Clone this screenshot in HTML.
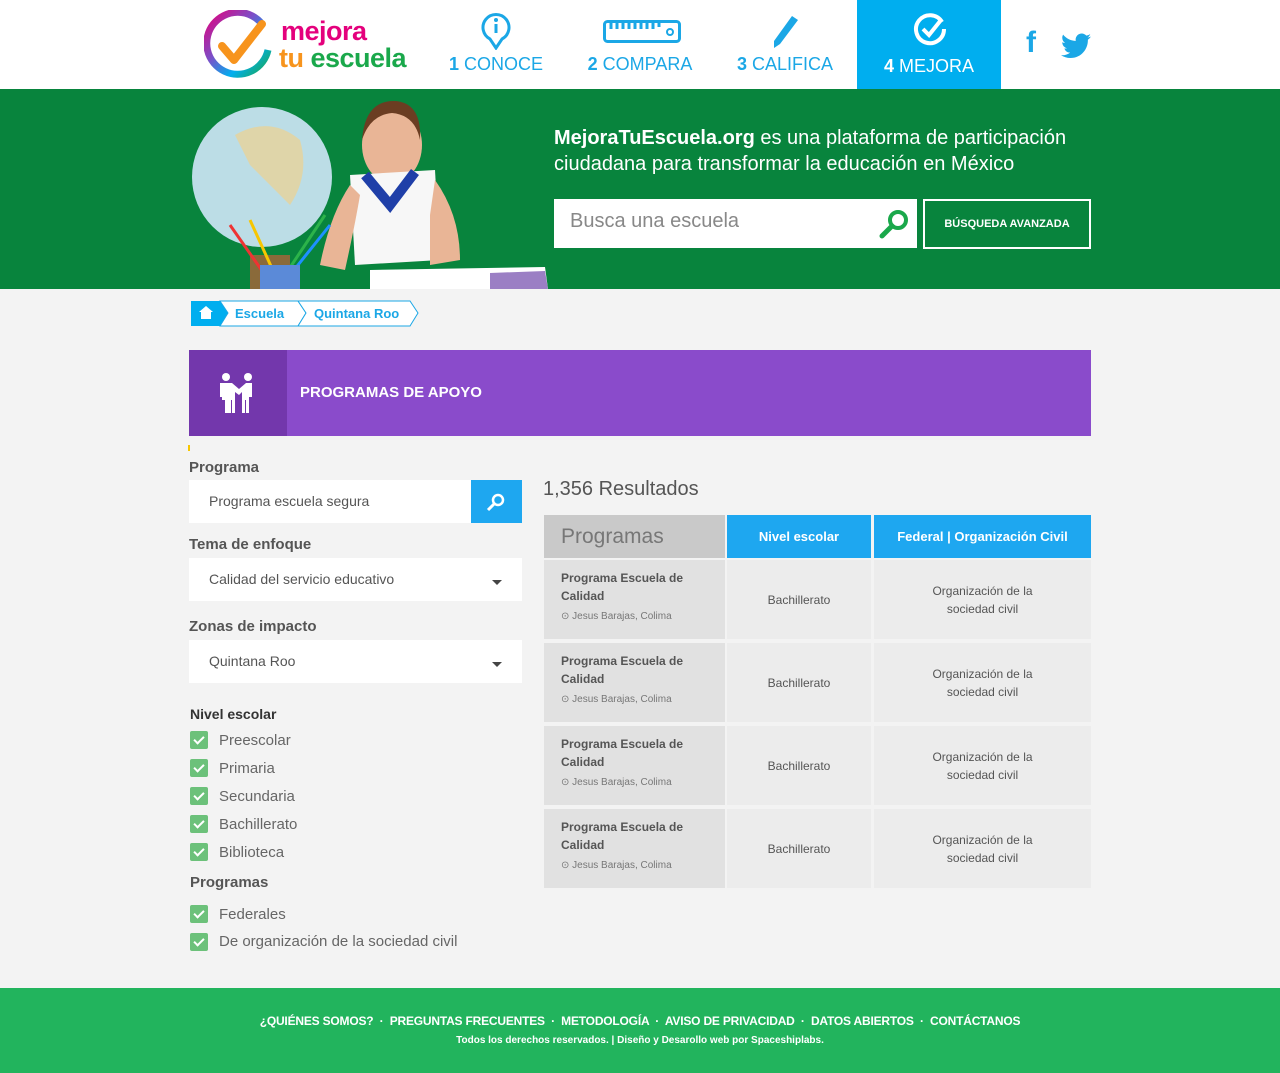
<!DOCTYPE html>
<html><head><meta charset="utf-8"><style>
*{margin:0;padding:0;box-sizing:border-box}
body{width:1280px;height:1073px;background:#f3f3f3;font-family:"Liberation Sans",sans-serif;position:relative;overflow:hidden;color:#555}
.a{position:absolute}
.nav{position:absolute;top:0;height:89px;text-align:center;color:#1ba7e6;font-size:18px}
.nav span{position:absolute;left:0;right:0;top:54px}
.nav b{font-weight:bold}
.lbl{font-weight:bold;font-size:15px;color:#555}
.inp{background:#fff;height:43px;font-size:14px;color:#555;padding:13px 20px}
.cb{position:absolute;left:190px;width:18px;height:18px;background:#6cc17a;border-radius:2px}
.cb:after{content:"";position:absolute;left:6px;top:3px;width:4px;height:8px;border:solid #fff;border-width:0 2px 2px 0;transform:rotate(45deg)}
.ct{position:absolute;left:219px;font-size:15px;color:#666}
.cell{position:absolute;background:#ececec;font-size:12px;color:#555;text-align:center;display:flex;align-items:center;justify-content:center;line-height:18px}
.c1{background:#e1e1e1;text-align:left;justify-content:flex-start;padding-left:17px;display:block}
.c1 b{display:block;font-size:12px;line-height:18px;color:#555;margin-top:9px}
.c1 i{font-style:normal;font-size:10px;color:#777;display:block;margin-top:3px}
.th{position:absolute;top:515px;height:43px;background:#1ea7f0;color:#fff;font-weight:bold;font-size:13px;display:flex;align-items:center;justify-content:center}
</style></head><body>
<div class="a" style="left:0;top:0;width:1280px;height:89px;background:#fff"></div>
<!-- logo -->
<svg class="a" style="left:204px;top:10px" width="72" height="72" viewBox="0 0 72 72">
<defs><linearGradient id="g" x1="0" y1="0" x2="1" y2="1"><stop offset="0" stop-color="#e4007c"/><stop offset=".4" stop-color="#7b4fc8"/><stop offset=".7" stop-color="#00aeef"/><stop offset="1" stop-color="#1aa84b"/></linearGradient></defs>
<path d="M58 14 A31 31 0 1 0 64 40" fill="none" stroke="url(#g)" stroke-width="7"/>
<path d="M18 36 L30 50 L58 14" fill="none" stroke="#f7941d" stroke-width="8" stroke-linecap="round" stroke-linejoin="round"/>
</svg>
<div class="a" style="left:281px;top:16px;font-size:27px;font-weight:bold;color:#e4007c;letter-spacing:-0.5px">mejora</div>
<div class="a" style="left:279px;top:43px;font-size:27px;font-weight:bold;color:#1aa84b;letter-spacing:-0.5px"><span style="color:#f7941d">tu</span> escuela</div>
<div class="nav" style="left:436px;width:120px"><svg class="a" style="left:45px;top:12px" width="30" height="38" viewBox="0 0 30 38"><path d="M15 36 L9 27 A13 13 0 1 1 21 27 Z" fill="none" stroke="#1ba7e6" stroke-width="3"/><rect x="13.5" y="12" width="3" height="9" fill="#1ba7e6"/><circle cx="15" cy="8" r="2" fill="#1ba7e6"/></svg><span><b>1</b> CONOCE</span></div>
<div class="nav" style="left:580px;width:120px"><svg class="a" style="left:23px;top:20px" width="78" height="23"><rect x="1.5" y="1.5" width="75" height="20" rx="3" fill="none" stroke="#1ba7e6" stroke-width="3"/><path d="M8 2v7M14 2v7M20 2v7M26 2v7M32 2v7M38 2v7M44 2v7M50 2v7M56 2v5" stroke="#1ba7e6" stroke-width="3"/><circle cx="67" cy="12" r="3" fill="none" stroke="#1ba7e6" stroke-width="2"/></svg><span><b>2</b> COMPARA</span></div>
<div class="nav" style="left:725px;width:120px"><svg class="a" style="left:45px;top:14px" width="30" height="36"><path d="M22 2 L28 6 L10 30 L4 34 L4 27 Z" fill="#1ba7e6"/></svg><span><b>3</b> CALIFICA</span></div>
<div class="nav" style="left:857px;width:144px;background:#00aeef;color:#fff"><svg class="a" style="left:56px;top:12px" width="34" height="34"><path d="M29 10 A14 14 0 1 0 31 17" fill="none" stroke="#fff" stroke-width="4"/><path d="M10 17 L16 23 L28 8" fill="none" stroke="#fff" stroke-width="4"/></svg><span style="top:56px"><b>4</b> MEJORA</span></div>
<div class="a" style="left:1026px;top:28px;font-size:30px;font-weight:bold;color:#1ba7e6;line-height:30px">f</div>
<svg class="a" style="left:1061px;top:33px" width="30" height="26" viewBox="0 0 24 20"><path d="M24 2.4c-.9.4-1.8.7-2.8.8 1-.6 1.8-1.6 2.2-2.7-1 .6-2 1-3.1 1.2C19.3.7 18 0 16.6 0c-2.7 0-4.9 2.2-4.9 4.9 0 .4 0 .8.1 1.1C7.7 5.8 4.1 3.9 1.7.9c-.4.7-.7 1.6-.7 2.5 0 1.7.9 3.2 2.2 4.1-.8 0-1.6-.2-2.2-.6v.1c0 2.4 1.7 4.4 3.9 4.8-.4.1-.8.2-1.3.2-.3 0-.6 0-.9-.1.6 2 2.4 3.4 4.6 3.4-1.7 1.3-3.8 2.1-6.1 2.1H0c2.2 1.4 4.8 2.2 7.5 2.2 9.1 0 14-7.5 14-14v-.6c1-.7 1.8-1.6 2.5-2.6z" fill="#1ba7e6"/></svg>
<!-- hero -->
<div class="a" style="left:0;top:89px;width:1280px;height:200px;background:#08843d"></div>
<svg class="a" style="left:190px;top:95px" width="360" height="194">
<rect x="60" y="160" width="40" height="34" fill="#8a6a3a"/>
<circle cx="72" cy="82" r="70" fill="#bcdde6"/>
<path d="M45 40 Q80 20 110 45 Q120 80 100 110 Q80 90 60 70 Z" fill="#e7d39a" opacity=".8"/>
<ellipse cx="202" cy="50" rx="30" ry="38" fill="#e9b596"/>
<path d="M172 45 Q175 5 205 6 Q232 8 230 45 Q225 20 202 18 Q180 20 172 45Z" fill="#6b3d22"/>
<path d="M160 80 L245 75 L250 165 L165 170 Z" fill="#f7f7f7"/>
<path d="M175 80 L200 110 L225 77" fill="none" stroke="#1f3fa8" stroke-width="10"/>
<path d="M160 90 Q140 120 130 170 L155 175 Q165 130 170 100Z" fill="#e9b596"/>
<path d="M245 85 Q270 120 270 165 L240 170 L240 120Z" fill="#e9b596"/>
<g stroke-width="3"><path d="M75 180 L40 130" stroke="#e33"/><path d="M85 180 L60 125" stroke="#f7c600"/><path d="M95 180 L135 120" stroke="#2cb34a"/><path d="M100 180 L140 130" stroke="#1e90ff"/></g>
<rect x="70" y="170" width="40" height="24" fill="#5b8ad8"/>
<path d="M180 175 L355 172 L358 194 L180 194Z" fill="#fff"/>
<path d="M300 178 L355 176 L358 194 L300 194Z" fill="#9b7fc4"/>
</svg>
<div class="a" style="left:554px;top:125px;color:#fff;font-size:20px;line-height:26px"><b>MejoraTuEscuela.org</b> es una plataforma de participación<br>ciudadana para transformar la educación en México</div>
<div class="a" style="left:554px;top:199px;width:363px;height:49px;background:#fff;font-size:20px;color:#888;padding:11px 16px">Busca una escuela</div>
<svg class="a" style="left:878px;top:208px" width="32" height="32"><circle cx="20" cy="12" r="8" fill="none" stroke="#1aa84b" stroke-width="4"/><path d="M14 18 L4 28" stroke="#1aa84b" stroke-width="5" stroke-linecap="round"/></svg>
<div class="a" style="left:923px;top:199px;width:168px;height:50px;border:2px solid #fff;color:#fff;font-size:11px;font-weight:bold;text-align:center;line-height:46px">BÚSQUEDA AVANZADA</div>
<!-- breadcrumb -->
<svg class="a" style="left:190px;top:300px" width="232" height="27">
<path d="M1 1 H30 L38 13 L30 26 H1Z" fill="#00aeef"/>
<path d="M30 1 H108 L116 13 L108 26 H30 L38 13Z" fill="#fff" stroke="#1ba7e6"/>
<path d="M108 1 H220 L228 13 L220 26 H108 L116 13Z" fill="#fff" stroke="#1ba7e6"/>
<path d="M16 6 L23 12 H21 V19 H11 V12 H9Z" fill="#fff"/>
</svg>
<div class="a" style="left:235px;top:306px;font-size:13px;font-weight:bold;color:#1ba7e6">Escuela</div>
<div class="a" style="left:314px;top:306px;font-size:13px;font-weight:bold;color:#1ba7e6">Quintana Roo</div>
<!-- purple -->
<div class="a" style="left:189px;top:350px;width:902px;height:86px;background:#8a4bcb"></div>
<div class="a" style="left:189px;top:350px;width:98px;height:86px;background:#7337ac"></div>
<svg class="a" style="left:216px;top:372px" width="44" height="42" fill="#fff"><circle cx="10" cy="5" r="4"/><circle cx="32" cy="5" r="4"/><path d="M4 11h12l7 6 7-6h6v14h-3v16h-3V28h-1v13h-3V20l-3 3-4-3v21h-3V28h-1v13H9V28H6v-3H4Z"/></svg>
<div class="a" style="left:300px;top:384px;font-size:15px;font-weight:bold;color:#fff">PROGRAMAS DE APOYO</div>
<div class="a" style="left:188px;top:445px;width:2px;height:6px;background:#f7c600"></div>
<!-- left filters -->
<div class="a lbl" style="left:189px;top:459px">Programa</div>
<div class="a inp" style="left:189px;top:480px;width:282px">Programa escuela segura</div>
<div class="a" style="left:471px;top:480px;width:51px;height:43px;background:#1ea7f0"></div>
<svg class="a" style="left:486px;top:492px" width="20" height="20"><circle cx="12" cy="8" r="5" fill="none" stroke="#fff" stroke-width="2.5"/><path d="M8 12 L2 18" stroke="#fff" stroke-width="3"/></svg>
<div class="a lbl" style="left:189px;top:536px">Tema de enfoque</div>
<div class="a inp" style="left:189px;top:558px;width:333px">Calidad del servicio educativo</div>
<div class="a" style="left:492px;top:580px;border:5px solid transparent;border-top:5px solid #444"></div>
<div class="a lbl" style="left:189px;top:618px">Zonas de impacto</div>
<div class="a inp" style="left:189px;top:640px;width:333px">Quintana Roo</div>
<div class="a" style="left:492px;top:662px;border:5px solid transparent;border-top:5px solid #444"></div>
<div class="a" style="left:190px;top:706px;font-size:14px;font-weight:bold;color:#333">Nivel escolar</div>
<div class="cb" style="top:731px"></div><div class="ct" style="top:732px">Preescolar</div>
<div class="cb" style="top:759px"></div><div class="ct" style="top:760px">Primaria</div>
<div class="cb" style="top:787px"></div><div class="ct" style="top:788px">Secundaria</div>
<div class="cb" style="top:815px"></div><div class="ct" style="top:816px">Bachillerato</div>
<div class="cb" style="top:843px"></div><div class="ct" style="top:844px">Biblioteca</div>
<div class="a lbl" style="left:190px;top:874px">Programas</div>
<div class="cb" style="top:905px"></div><div class="ct" style="top:906px">Federales</div>
<div class="cb" style="top:933px"></div><div class="ct" style="top:933px">De organización de la sociedad civil</div>
<!-- results -->
<div class="a" style="left:543px;top:478px;font-size:20px;color:#555">1,356 Resultados</div>
<div class="th" style="left:544px;width:181px;background:#c9c9c9;color:#777;font-weight:normal;font-size:21px;justify-content:flex-start;padding-left:17px">Programas</div>
<div class="th" style="left:727px;width:144px">Nivel escolar</div>
<div class="th" style="left:874px;width:217px">Federal | Organización Civil</div>
<div class="cell c1" style="left:544px;top:560px;width:181px;height:79px"><b>Programa Escuela de Calidad</b><i>⊙ Jesus Barajas, Colima</i></div>
<div class="cell" style="left:727px;top:560px;width:144px;height:79px">Bachillerato</div>
<div class="cell" style="left:874px;top:560px;width:217px;height:79px">Organización de la<br>sociedad civil</div>
<div class="cell c1" style="left:544px;top:643px;width:181px;height:79px"><b>Programa Escuela de Calidad</b><i>⊙ Jesus Barajas, Colima</i></div>
<div class="cell" style="left:727px;top:643px;width:144px;height:79px">Bachillerato</div>
<div class="cell" style="left:874px;top:643px;width:217px;height:79px">Organización de la<br>sociedad civil</div>
<div class="cell c1" style="left:544px;top:726px;width:181px;height:79px"><b>Programa Escuela de Calidad</b><i>⊙ Jesus Barajas, Colima</i></div>
<div class="cell" style="left:727px;top:726px;width:144px;height:79px">Bachillerato</div>
<div class="cell" style="left:874px;top:726px;width:217px;height:79px">Organización de la<br>sociedad civil</div>
<div class="cell c1" style="left:544px;top:809px;width:181px;height:79px"><b>Programa Escuela de Calidad</b><i>⊙ Jesus Barajas, Colima</i></div>
<div class="cell" style="left:727px;top:809px;width:144px;height:79px">Bachillerato</div>
<div class="cell" style="left:874px;top:809px;width:217px;height:79px">Organización de la<br>sociedad civil</div>
<!-- footer -->
<div class="a" style="left:0;top:988px;width:1280px;height:85px;background:#22b45d"></div>
<div class="a" style="left:0;top:1014px;width:1280px;text-align:center;color:#fff;font-size:12px;font-weight:bold;white-space:nowrap;letter-spacing:-0.2px">¿QUIÉNES SOMOS? &nbsp;·&nbsp; PREGUNTAS FRECUENTES &nbsp;·&nbsp; METODOLOGÍA &nbsp;·&nbsp; AVISO DE PRIVACIDAD &nbsp;·&nbsp; DATOS ABIERTOS &nbsp;·&nbsp; CONTÁCTANOS</div>
<div class="a" style="left:0;top:1035px;width:1280px;text-align:center;color:#fff;font-size:10px;font-weight:bold">Todos los derechos reservados. | Diseño y Desarollo web por Spaceshiplabs.</div>
</body></html>
